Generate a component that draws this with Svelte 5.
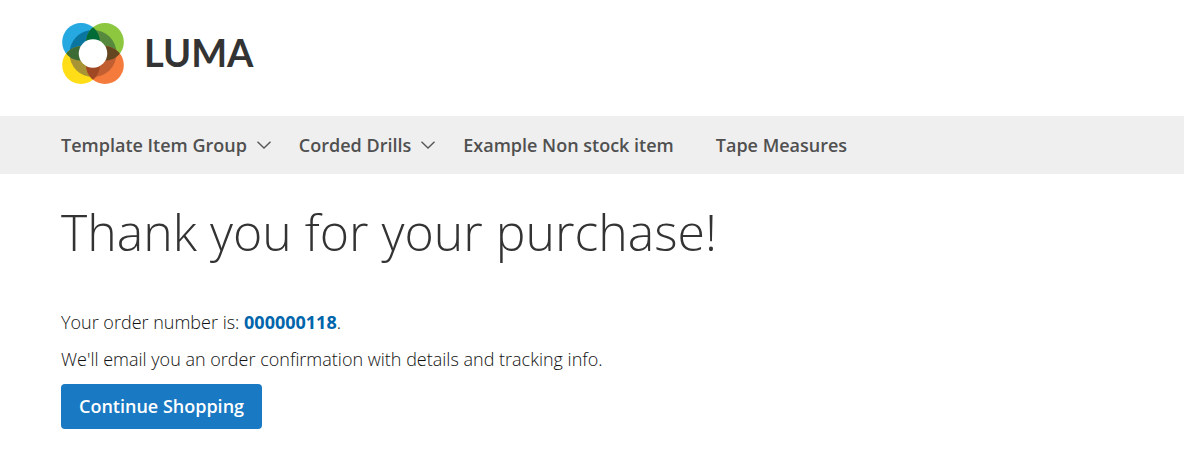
<script>
  const items = [
    { label: 'Template Item Group', menu: true },
    { label: 'Corded Drills', menu: true },
    { label: 'Example Non stock item', menu: false },
    { label: 'Tape Measures', menu: false }
  ];
</script>

<header>
  <a class="logo" href="#home" aria-label="Luma">
    <svg viewBox="0 0 186 184" width="62" height="61" aria-hidden="true">
      <defs>
        <clipPath id="tl"><circle cx="57" cy="57" r="57" /></clipPath>
        <clipPath id="br"><circle cx="129" cy="127" r="57" /></clipPath>
        <clipPath id="disk"><circle cx="93" cy="92" r="71" /></clipPath>
      </defs>
      <circle cx="57" cy="57" r="57" fill="#26a9e1" />
      <circle cx="129" cy="57" r="57" fill="#8dc63f" />
      <circle cx="57" cy="127" r="57" fill="#ffde17" />
      <circle cx="129" cy="127" r="57" fill="#f47b3c" />
      <g clip-path="url(#disk)">
        <circle cx="57" cy="57" r="57" fill="#0a759f" />
        <circle cx="129" cy="57" r="57" fill="#56883d" />
        <circle cx="57" cy="127" r="57" fill="#a89434" />
        <circle cx="129" cy="127" r="57" fill="#c25f32" />
      </g>
      <g clip-path="url(#tl)">
        <circle cx="129" cy="57" r="57" fill="#006b37" />
        <circle cx="57" cy="127" r="57" fill="#3d6b35" />
      </g>
      <g clip-path="url(#br)">
        <circle cx="129" cy="57" r="57" fill="#644720" />
        <circle cx="57" cy="127" r="57" fill="#a04823" />
      </g>
      <circle cx="93" cy="92" r="43" fill="#fff" />
    </svg>
    <span>LUMA</span>
  </a>
</header>

<nav aria-label="Main">
  {#each items as item}
    <a href="#category">
      {item.label}
      {#if item.menu}
        <svg viewBox="0 0 14 8" width="14" height="8" aria-hidden="true">
          <path d="M.5.7 7 7 13.500.7" />
        </svg>
      {/if}
    </a>
  {/each}
</nav>

<main>
  <h1>Thank you for your purchase!</h1>
  <p>Your order number is: <a href="#order">000000118</a>.</p>
  <p>We'll email you an order confirmation with details and tracking info.</p>
  <button type="button">Continue Shopping</button>
</main>

<style>
  :global(body) {
    background: #fff;
    color: #333;
    font: 300 18px/24px 'Open Sans', sans-serif;
  }
  header {
    display: flex;
    padding: 23px 62px 32px;
  }
  .logo {
    display: flex;
    align-items: center;
    gap: 20px;
    height: 61px;
    color: #333;
    text-decoration: none;
    font: 700 38px/56px Lato, sans-serif;
  }
  .logo span {
    padding-bottom: 4px;
  }
  nav {
    display: flex;
    flex-wrap: wrap;
    gap: 0 42px;
    padding: 0 61px;
    background: #efefef;
  }
  nav a {
    display: flex;
    align-items: center;
    gap: 10px;
    color: #505050;
    font-weight: 600;
    line-height: 58px;
    text-decoration: none;
  }
  nav a:has(svg) {
    margin-right: -14px;
  }
  nav path {
    fill: none;
    stroke: #575757;
    stroke-width: 1.4;
  }
  main {
    padding: 30px 61px 24px;
  }
  h1 {
    margin: 0 0 50px;
    font-size: 50px;
    font-weight: 300;
    line-height: 56px;
  }
  p {
    margin: 0 0 13px;
    color: #111;
  }
  p a {
    color: #0065ab;
    font-weight: 700;
    text-decoration: none;
  }
  button {
    padding: 0 18px;
    border: 0;
    border-radius: 4px;
    background: #1979c3;
    color: #fff;
    font: 600 18px/45px 'Open Sans', sans-serif;
    cursor: pointer;
  }
</style>
